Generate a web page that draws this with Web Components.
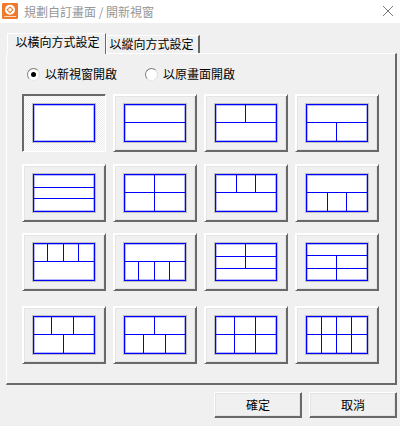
<!DOCTYPE html>
<html lang="zh-Hant">
<head>
<meta charset="utf-8">
<title>規劃自訂畫面</title>
<style>
html,body{margin:0;padding:0;background:#f0f0f0;}
body{width:400px;height:426px;overflow:hidden;font:12px/16px "Noto Sans CJK TC","Liberation Sans",sans-serif;color:#000;}
</style>
</head>
<body>
<dialog-window>
  <title-bar slot="title">規劃自訂畫面 / 開新視窗</title-bar>
  <tab-strip slot="tabs">
    <tab-item active>以橫向方式設定</tab-item>
    <tab-item>以縱向方式設定</tab-item>
  </tab-strip>
  <tab-panel slot="panel">
    <radio-row>
      <radio-option checked>以新視窗開啟</radio-option>
      <radio-option>以原畫面開啟</radio-option>
    </radio-row>
    <layout-grid>
      <layout-button pressed></layout-button>
      <layout-button lines="h18"></layout-button>
      <layout-button lines="h18 v30:0:18"></layout-button>
      <layout-button lines="h18 v30:18:38"></layout-button>

      <layout-button lines="h13 h24"></layout-button>
      <layout-button lines="h18 v30"></layout-button>
      <layout-button lines="h18 v21:0:18 v40:0:18"></layout-button>
      <layout-button lines="h18 v21:18:38 v40:18:38"></layout-button>

      <layout-button lines="h18 v14:0:18 v30:0:18 v45:0:18"></layout-button>
      <layout-button lines="h18 v14:18:38 v30:18:38 v45:18:38"></layout-button>
      <layout-button lines="h13 h25 v30:0:25"></layout-button>
      <layout-button lines="h12 h25 v30:12:38"></layout-button>

      <layout-button lines="h18 v18:0:18 v40:0:18 v30:18:38"></layout-button>
      <layout-button lines="h18 v30:0:18 v19:18:38 v41:18:38"></layout-button>
      <layout-button lines="h18 v19 v40"></layout-button>
      <layout-button lines="h18 v15 v30 v45"></layout-button>
    </layout-grid>
  </tab-panel>
  <dialog-footer slot="footer">
    <push-button>確定</push-button>
    <push-button>取消</push-button>
  </dialog-footer>
</dialog-window>
<script>
function make(name, html, init){
  customElements.define(name, class extends HTMLElement{
    constructor(){super();this.attachShadow({mode:"open"}).innerHTML=html;}
    connectedCallback(){if(init)init.call(this);}
  });
}
make("dialog-window",`<style>
:host{display:flex;flex-direction:column;width:400px;height:426px;background:#f0f0f0;}
.tabs{padding:10px 0 0 7px;height:20px;position:relative;z-index:1;}
.panel{margin:0 3px 0 6px;}
.footer{margin-top:7px;}
</style>
<slot name="title"></slot>
<div class="tabs"><slot name="tabs"></slot></div>
<div class="panel"><slot name="panel"></slot></div>
<div class="footer"><slot name="footer"></slot></div>`);

make("title-bar",`<style>
:host{display:flex;align-items:center;height:23px;background:#fff;color:#969696;font-size:12px;}
svg{display:block;flex:none;}
.icon{margin:0 6px 1px 2px;}
.text{flex:1;white-space:nowrap;}
.x{margin:0 6px 2px 0;}
</style>
<svg class="icon" width="16" height="16" viewBox="0 0 16 16">
<rect width="16" height="16" rx="1" fill="#ee7b2d"/>
<circle cx="8" cy="6.8" r="5" fill="#fff"/>
<path d="M8 3.2 11.6 6.8 8 10.4 4.4 6.8Z" fill="#ee7b2d"/>
<circle cx="8" cy="6.8" r="1.7" fill="#fff"/>
<rect x="2" y="13" width="12" height="1" fill="#fbd9c0"/>
</svg>
<span class="text"><slot></slot></span>
<svg class="x" width="12" height="12" viewBox="0 0 12 12"><path d="M1 1 11 11M11 1 1 11" stroke="#7a7a7a" stroke-width="1" fill="none"/></svg>`);

make("tab-strip",`<style>
:host{display:flex;align-items:flex-start;}
</style><slot></slot>`);

make("tab-item",`<style>
:host{display:block;box-sizing:border-box;width:94px;height:18px;margin-top:2px;background:#f0f0f0;
  border-top:1px solid #fff;border-left:1px solid #fff;border-right:2px solid #696969;
  text-align:center;white-space:nowrap;line-height:15px;padding-right:2px;}
:host([active]){width:99px;height:21px;margin-top:0;line-height:15px;border-right-width:1px;padding:0 0 0 2px;}
</style><slot></slot>`);

make("tab-panel",`<style>
:host{display:block;box-sizing:border-box;height:332px;background:#f0f0f0;
  border-top:1px solid #fff;border-left:1px solid #fff;border-right:2px solid #696969;border-bottom:2px solid #696969;
  padding:10px 0 0 15px;}
</style><slot></slot>`);

make("radio-row",`<style>
:host{display:flex;align-items:center;height:20px;margin:0 0 10px 5px;gap:28px;}
</style><slot></slot>`);

make("radio-option",`<style>
:host{display:flex;align-items:center;gap:5px;white-space:nowrap;}
.r{box-sizing:border-box;width:13px;height:13px;border-radius:50%;background:#fff;border:1px solid;
  border-color:#7f7f7f #dcdcdc #e8e8e8 #7f7f7f;display:flex;align-items:center;justify-content:center;}
.d{width:5px;height:5px;border-radius:50%;background:#000;display:none;}
:host([checked]) .d{display:block;}
</style><span class="r"><span class="d"></span></span><span><slot></slot></span>`);

make("layout-grid",`<style>
:host{display:grid;grid-template-columns:repeat(4,84px);column-gap:7px;grid-template-rows:70px 69px 73px 58px;align-items:start;}
</style><slot></slot>`);

make("layout-button",`<style>
:host{display:flex;align-items:center;justify-content:center;box-sizing:border-box;width:84px;height:58px;background:#f0f0f0;
  border:1px solid;border-color:#fff #696969 #696969 #fff;box-shadow:inset 1px 1px 0 #fff,inset -1px -1px 0 #696969,inset 2px 2px 0 #e4e4e4,inset -2px -2px 0 #e4e4e4;}
:host([pressed]){border-color:#696969 #fff #fff #696969;
  box-shadow:inset 1px 1px 0 #696969;
  background:repeating-conic-gradient(#fff 0 25%,#ececec 0 50%) 0 0/2px 2px;}
svg{display:block;}
</style><svg width="64" height="40" viewBox="0 0 64 40" shape-rendering="crispEdges"></svg>`,function(){
  const W=62,H=38;
  let s=`<rect width="64" height="40" fill="#c0c0c0"/><rect x="1" y="1" width="${W}" height="${H}" fill="#0000ff"/><rect x="2" y="2" width="${W-2}" height="${H-2}" fill="#b4b4ff"/><rect x="3" y="3" width="${W-4}" height="${H-4}" fill="#fff"/>`;
  for(const t of (this.getAttribute("lines")||"").split(/\s+/).filter(Boolean)){
    const p=t.slice(1).split(":").map(Number);
    if(t[0]==="h") s+=`<rect x="1" y="${1+p[0]}" width="${W}" height="1" fill="#0000ff"/>`;
    else{
      const a=p.length>1?p[1]:0,b=p.length>1?p[2]:H;
      s+=`<rect x="${1+p[0]}" y="${1+a}" width="1" height="${b-a}" fill="#0000ff"/>`;
    }
  }
  this.shadowRoot.querySelector("svg").innerHTML=s;
});

make("dialog-footer",`<style>
:host{display:flex;justify-content:flex-end;gap:7px;padding-right:3px;}
</style><slot></slot>`);

make("push-button",`<style>
:host{display:flex;align-items:center;justify-content:center;box-sizing:border-box;width:88px;height:26px;padding-bottom:1px;background:#f0f0f0;
  border:1px solid;border-color:#fff #696969 #696969 #fff;box-shadow:inset -1px -1px 0 #696969,inset 1px 1px 0 #e4e4e4,inset -2px -2px 0 #e4e4e4;}
</style><slot></slot>`);
</script>
</body>
</html>
